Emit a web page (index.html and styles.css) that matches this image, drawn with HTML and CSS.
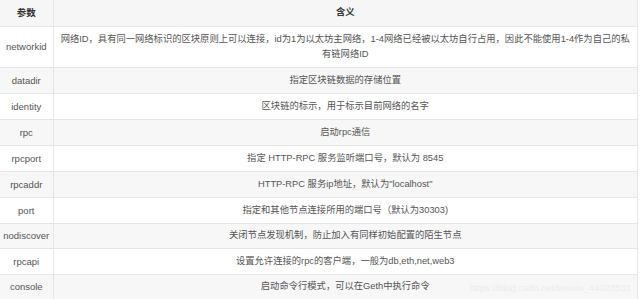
FILE: index.html
```html
<!DOCTYPE html>
<html lang="zh">
<head>
<meta charset="utf-8">
<link rel="stylesheet" href="styles.css">
</head>
<body>
<table class="params">
  <colgroup><col class="c-name"><col class="c-desc"></colgroup>
  <thead>
    <tr class="r-head"><th>参数</th><th>含义</th></tr>
  </thead>
  <tbody>
    <tr class="r-tall"><td>networkid</td><td>网络ID，具有同一网络标识的区块原则上可以连接，id为1为以太坊主网络，1-4网络已经被以太坊自行占用，因此不能使用1-4作为自己的私<br>有链网络ID</td></tr>
    <tr class="r26"><td>datadir</td><td>指定区块链数据的存储位置</td></tr>
    <tr class="r26"><td>identity</td><td>区块链的标示，用于标示目前网络的名字</td></tr>
    <tr class="r26"><td>rpc</td><td>启动rpc通信</td></tr>
    <tr class="r26"><td>rpcport</td><td>指定 HTTP-RPC 服务监听端口号，默认为 8545</td></tr>
    <tr class="r26"><td>rpcaddr</td><td>HTTP-RPC 服务ip地址，默认为"localhost"</td></tr>
    <tr class="r26"><td>port</td><td>指定和其他节点连接所用的端口号（默认为30303)</td></tr>
    <tr class="r25"><td>nodiscover</td><td>关闭节点发现机制，防止加入有同样初始配置的陌生节点</td></tr>
    <tr class="r26"><td>rpcapi</td><td>设置允许连接的rpc的客户端，一般为db,eth,net,web3</td></tr>
    <tr class="r25"><td>console</td><td class="last">启动命令行模式，可以在Geth中执行命令<span class="wm">https://blog.csdn.net/weixin_44023531</span></td></tr>
  </tbody>
</table>
</body>
</html>
```
FILE: styles.css
```css
html, body {
  margin: 0;
  padding: 0;
  background: #ffffff;
}
body {
  width: 640px;
  height: 299px;
  overflow: hidden;
  font-family: "Liberation Sans", "Noto Sans CJK SC", sans-serif;
  font-size: 9.3px;
  color: #555555;
}
.params {
  width: 638px;
  border-collapse: collapse;
  table-layout: fixed;
}
.c-name { width: 53px; }
.params th, .params td {
  border: 1px solid #e6e6e6;
  text-align: center;
  vertical-align: middle;
  padding: 0 2px;
  line-height: 15px;
}
.params th {
  color: #333333;
  font-weight: bold;
  background: #f6f6f6;
  border-top: none;
}
.params tr td:first-child, .params tr th:first-child {
  border-left: none;
  padding: 0;
  font-size: 9.5px;
}
.params tbody tr:nth-child(even) td { background: #f7f7f7; }
.params tbody tr:nth-child(odd) td { background: #ffffff; }
.r-head { height: 26px; }
.r-tall { height: 41px; }
.r26 { height: 26px; }
.r25 { height: 25px; }
.last { position: relative; }
.wm {
  position: absolute;
  right: 6px;
  top: 7px;
  color: #ececec;
  font-size: 9.5px;
  line-height: 11px;
}
```
